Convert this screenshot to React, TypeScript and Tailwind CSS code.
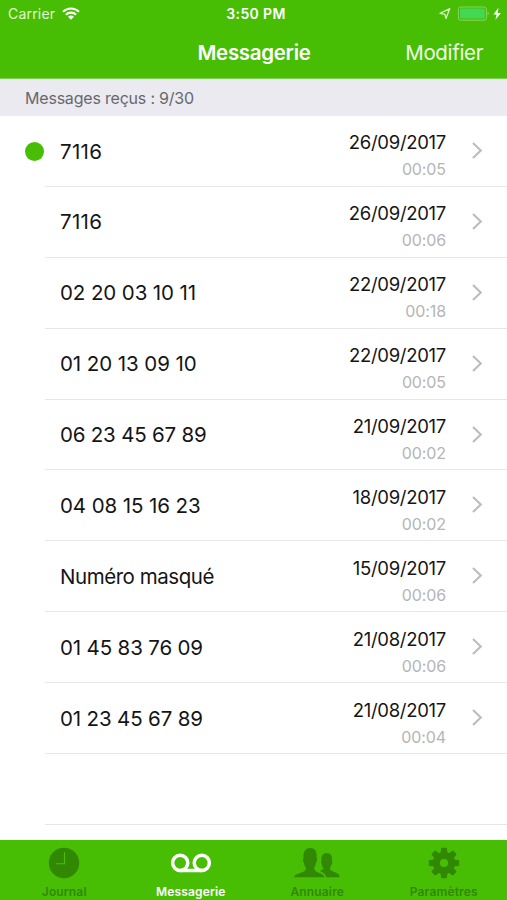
import React from 'react';

type Message = {
    caller: string;
    spacing: string;
    date: string;
    duration: string;
    unread?: boolean;
};

const messages: Message[] = [
    { caller: '7116', spacing: 'tracking-[0.3px]', date: '26/09/2017', duration: '00:05', unread: true },
    { caller: '7116', spacing: 'tracking-[0.3px]', date: '26/09/2017', duration: '00:06' },
    { caller: '02 20 03 10 11', spacing: 'tracking-[-0.1px]', date: '22/09/2017', duration: '00:18' },
    { caller: '01 20 13 09 10', spacing: 'tracking-[-0.08px]', date: '22/09/2017', duration: '00:05' },
    { caller: '06 23 45 67 89', spacing: 'tracking-[-0.2px]', date: '21/09/2017', duration: '00:02' },
    { caller: '04 08 15 16 23', spacing: 'tracking-[-0.1px]', date: '18/09/2017', duration: '00:02' },
    { caller: 'Numéro masqué', spacing: 'tracking-[-0.45px]', date: '15/09/2017', duration: '00:06' },
    { caller: '01 45 83 76 09', spacing: 'tracking-[-0.15px]', date: '21/08/2017', duration: '00:06' },
    { caller: '01 23 45 67 89', spacing: 'tracking-[-0.15px]', date: '21/08/2017', duration: '00:04' },
];

function WifiIcon() {
    return (
        <svg width="18" height="13" viewBox="0 0 18 13" fill="none" stroke="white" strokeWidth="2.1">
            <path d="M1 4.8C5.5 .4 12.5 .4 17 4.8" />
            <path d="M3.9 7.7c2.9-2.8 7.3-2.8 10.2 0" />
            <path d="M6 9.7c1.7-1.5 4.3-1.5 6 0L9 12.8z" fill="white" stroke="none" />
        </svg>
    );
}

function StatusIcons() {
    return (
        <svg width="64" height="16" viewBox="0 0 64 16" fill="none">
            <path d="M2 7.4 11.8 2.6 8 12.5 7 8.3z" stroke="#d3f3c4" strokeWidth="1.3" strokeLinejoin="round" />
            <rect x="20.4" y="1" width="28" height="13.2" rx="2.2" stroke="#8bd65b" strokeWidth="1" />
            <rect x="22" y="2.6" width="24.8" height="10" rx="1" fill="#43d854" />
            <path d="M49.6 5.6v4c1.6-.6 1.6-3.4 0-4z" fill="#8bd65b" />
            <path d="M60.6 1.6 55.4 8.4h3.2L57.4 13.8 63 6.9h-3.4z" fill="white" />
        </svg>
    );
}

function ClockIcon() {
    return (
        <svg width="32" height="32" viewBox="0 0 32 32">
            <circle cx="16" cy="16" r="15.2" fill="#318803" />
            <path d="M16.5 5.2v11.5H8" fill="none" stroke="#47be03" strokeWidth="1.1" />
        </svg>
    );
}

function VoicemailIcon() {
    return (
        <svg width="42" height="32" viewBox="0 0 42 32" fill="none" stroke="white" strokeWidth="3.5">
            <circle cx="10.2" cy="15.8" r="7.6" />
            <circle cx="31.8" cy="15.8" r="7.6" />
            <path d="M10.2 23.5h21.6" />
        </svg>
    );
}

function PeopleIcon() {
    return (
        <svg width="46" height="32" viewBox="0 0 46 32" fill="#318803">
            <path d="M.2 30.2c.3-2.6 4.5-3.5 8.7-5.2 2.1-.9 3-1.8 2.9-4.2-1.2-1.5-1.6-3.3-1.9-5.3-1-.5-1.4-3.8-.4-4.2C8.8 5 11.3 1 16 .9c5.3-.3 7.3 3.9 6.5 10.3 1.1.4.5 3.8-.5 4.3-.2 2-.7 3.8-1.8 5.1-.1 2.5.7 3.4 2.8 4.3 4.2 1.8 7.1 2.6 7.5 5.3z" />
            <path d="M26 23.9c1.9-.8 3.2-1.2 3.4-2.8-1.1-1.1-1.4-2.4-1.6-4-.9-.6-1-2.8-.3-3.2-.5-4.7 1.3-7.8 5.2-7.8s5.9 3.1 5.2 7.8c.8.4.5 2.8-.4 3.3-.2 1.6-.6 2.6-1.6 3.6-.1 2.1.8 2.8 3.1 3.8 3.4 1.4 6.3 2.2 6.8 5.6H32.2c-.5-3.4-2.7-4.6-6.2-6.3z" />
        </svg>
    );
}

function GearIcon() {
    const teeth = [0, 45, 90, 135, 180, 225, 270, 315];

    return (
        <svg width="32" height="32" viewBox="0 0 32 32" fill="#318803">
            <circle cx="16" cy="16" r="7.6" fill="none" stroke="#318803" strokeWidth="7" />
            {teeth.map((angle) => (
                <path key={angle} d="M12.5 6.5 13.1 1.5Q13.2.8 14 .8h4q.8 0 .9.7l.6 5z" transform={`rotate(${angle} 16 16)`} />
            ))}
        </svg>
    );
}

function MessageRow({ message }: { message: Message }) {
    return (
        <li className="flex h-[70.9px] pl-[25px]">
            <div className="flex w-5 shrink-0 items-center">
                {message.unread && <span className="size-[19px] shrink-0 rounded-full bg-[#47be03]" />}
            </div>
            <div className="flex flex-1 items-center border-b-[1.5px] border-[#e7e7e8] pl-[15px] pr-[24px]">
                <span className={`flex-1 pt-0.5 text-[20.5px] whitespace-nowrap text-[#151515] ${message.spacing}`}>{message.caller}</span>
                <div className="flex flex-col items-end pt-[10px]">
                    <span className="text-[18.5px] leading-[27px] tracking-[-0.3px] text-[#151515]">{message.date}</span>
                    <span className="text-[16px] leading-[26px] tracking-[-0.1px] text-[#b5b5b5]">{message.duration}</span>
                </div>
                <svg className="ml-[25px]" width="12" height="20" viewBox="0 0 12 20" fill="none" stroke="#bcbcc0" strokeWidth="2.1">
                    <path d="M2 2 9.8 9.5 2 17" />
                </svg>
            </div>
        </li>
    );
}

function Tab({ label, icon, active }: { label: string; icon: React.ReactNode; active?: boolean }) {
    return (
        <div className={`flex flex-1 flex-col items-center pt-[7px] text-[12px] font-semibold ${active ? 'text-white' : 'text-[#318803]'}`}>
            {icon}
            <span className="mt-[5px] leading-4 tracking-[0.15px]">{label}</span>
        </div>
    );
}

export default function App() {
    return (
        <div className="flex h-[900px] w-[507px] flex-col overflow-hidden bg-white font-['Inter',sans-serif]">
            <header className="h-[79px] shrink-0 border-b border-[#7ed04f] bg-[#47be03] text-white">
                <div className="grid h-[27px] grid-cols-3 items-center pl-2 pr-[5px] text-[14px]">
                    <div className="flex items-center gap-[7px]">
                        <span className="tracking-[0.2px] text-[#e2f7d6]">Carrier</span>
                        <WifiIcon />
                    </div>
                    <span className="pl-0.5 text-center font-semibold tracking-[0.35px]">3:50 PM</span>
                    <div className="flex justify-end"><StatusIcons /></div>
                </div>
                <div className="grid h-[51px] grid-cols-[1fr_auto_1fr] items-center pt-0.5 pr-6 pl-[25px] text-[20.5px]">
                    <span />
                    <h1 className="font-semibold tracking-[-0.3px]">Messagerie</h1>
                    <span className="text-right tracking-[-0.35px] text-[#effbe8]">Modifier</span>
                </div>
            </header>

            <div className="flex h-[37px] shrink-0 items-center bg-[#ebeaf1] pl-[25px] text-[16px] tracking-[-0.2px] text-[#68686c]">
                Messages reçus : 9/30
            </div>

            <ul className="h-[724px] overflow-hidden">
                {messages.map((message, index) => (
                    <MessageRow key={index} message={message} />
                ))}
                <li className="ml-[45px] h-[70.9px] border-b-[1.5px] border-[#e7e7e8]" />
            </ul>

            <nav className="flex h-[60px] shrink-0 bg-[#47be03] pl-px">
                <Tab label="Journal" icon={<ClockIcon />} />
                <Tab label="Messagerie" icon={<VoicemailIcon />} active />
                <Tab label="Annuaire" icon={<PeopleIcon />} />
                <Tab label="Paramètres" icon={<GearIcon />} />
            </nav>
        </div>
    );
}
